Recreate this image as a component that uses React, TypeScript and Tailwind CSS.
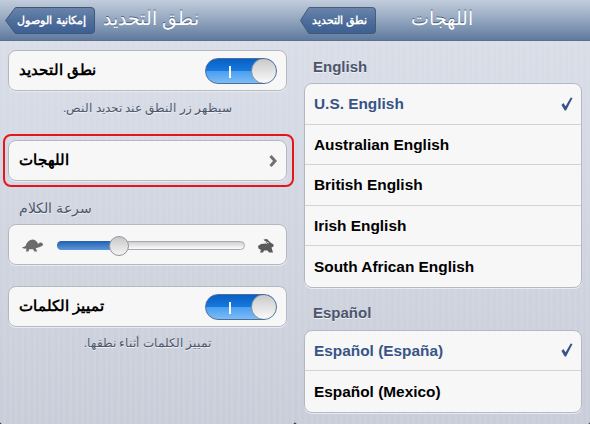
const sans = "font-['Liberation_Sans','Noto_Sans',sans-serif]";
const paneBg =
  "rounded-b-[2px] bg-[repeating-linear-gradient(90deg,transparent_0,transparent_3px,rgba(255,255,255,.06)_3px,rgba(255,255,255,.06)_6px),linear-gradient(#dadfe9,#c8cdd9)]";

function Switch() {
  return (
    <div className="relative h-[26px] w-[72px] overflow-hidden rounded-full border border-[#4a6f9e] bg-[linear-gradient(#0a5fc4_0%,#1578dc_48%,#4a9ff0_52%,#7dbcf6_100%)]">
      <div className="absolute left-[23px] top-[7px] h-[12px] w-[2px] bg-white" />
      <div className="absolute right-[-1px] top-[-1px] h-[26px] w-[26px] rounded-full border border-[#8a8f96] bg-[linear-gradient(#c9c9c9,#fafafa)]" />
    </div>
  );
}

function NavBar({ title, back, backWidth, titleClass }: { title: string; back: string; backWidth: string; titleClass: string }) {
  return (
    <div className="flex h-[41px] items-center border-b border-[#5d708b] bg-[linear-gradient(#c2cddc_0%,#93a6bf_50%,#5f7a9e_100%)] pl-[5px]">
      <div className={`relative flex h-[27px] items-center justify-center ${backWidth}`}>
        <svg className="absolute inset-0 h-full w-full" viewBox="0 0 90 27" preserveAspectRatio="none">
          <defs>
            <linearGradient id="backFill" x1="0" y1="0" x2="0" y2="1">
              <stop offset="0" stopColor="#6a85ab" />
              <stop offset="0.5" stopColor="#4f6f9b" />
              <stop offset="1" stopColor="#3d5f92" />
            </linearGradient>
          </defs>
          <path d="M.6 13.5 10 1q.4-.5 1-.5h75q3.500 0 3.500 3.500v19q0 3.500-3.500 3.500H11q-.6 0-1-.5z" fill="url(#backFill)" stroke="#3f5674" />
        </svg>
        <span dir="rtl" className="relative pl-[3px] text-[11px] font-bold text-white">{back}</span>
      </div>
      <div dir="rtl" className={`mt-[-2px] text-[19px] text-white [text-shadow:0_-1px_0_#4a5f7c] ${titleClass}`}>{title}</div>
    </div>
  );
}

function Card({ children, className }: { children: React.ReactNode; className: string }) {
  return <div className={`mx-[8px] rounded-[8px] border border-[#b4b8c0] bg-[#f7f7f7] shadow-[0_1px_0_#e8ebf1] ${className}`}>{children}</div>;
}

function ToggleRow({ label }: { label: string }) {
  return (
    <Card className="flex h-[41px] items-center justify-between pl-[10px] pr-[9px]">
      <span dir="rtl" className="text-[15px] font-bold text-black">{label}</span>
      <Switch />
    </Card>
  );
}

function Note({ children, className }: { children: string; className: string }) {
  return (
    <p dir="rtl" className={`text-center text-[12px] leading-[16px] text-[#4c566a] [text-shadow:0_1px_0_#eef0f4] ${className}`}>
      {children}
    </p>
  );
}

function Turtle() {
  return (
    <svg width="24" height="13" viewBox="0 1 24 14" fill="#6b6b6b">
      <path d="M0 10.500 4 8.500Q6 2 12 1.500 16 2 17.500 6.500 19 4.500 21.500 5 23.500 6 22.500 8 20 10 15 11L16.500 14.500H13.500L12 12H8L7 14.500H4.500L5 11.500Q2 11.500 0 10.500Z" />
    </svg>
  );
}

function Rabbit() {
  return (
    <svg width="16" height="14" viewBox="0 0 16 14" fill="#5a5a5a">
      <path d="M5.500 .5 9 0 12.500 3.500 15.500 5.500 15.500 7.500 13.500 8.500 15 13.500H11L9.500 11.500H6L5 13.500H2L3 11 .5 9.500 0 7 3 5 7.500 4.500 9.500 5.500Z" />
      <path d="M6.500 2 11 4.200" stroke="#f7f7f7" strokeWidth="0.7" />
    </svg>
  );
}

function Slider() {
  return (
    <Card className="flex h-[41px] items-center pl-[12px] pr-[12px] pt-[2px]">
      <Turtle />
      <div className="relative ml-[12px] h-[9px] w-[188px] rounded-full border border-[#a5a9b0] bg-[linear-gradient(#cfcfcf,#fdfdfd)]">
        <div className="absolute left-[-1px] top-[-1px] h-[9px] w-[57px] rounded-l-full bg-[linear-gradient(#235fae,#5c97dc)]" />
        <div className="absolute left-[51px] top-[-6px] h-[20px] w-[20px] rounded-full border border-[#92969c] bg-[linear-gradient(#c8c8c8,#f4f4f4)]" />
      </div>
      <div className="ml-auto">
        <Rabbit />
      </div>
    </Card>
  );
}

function LeftPane() {
  return (
    <div className={`h-full w-[295px] shrink-0 ${paneBg}`}>
      <NavBar title="نطق التحديد" back="إمكانية الوصول" backWidth="w-[90px]" titleClass="ml-[8px]" />
      <div className="pt-[9px]">
        <ToggleRow label="نطق التحديد" />
        <Note className="mt-[9px]">سيظهر زر النطق عند تحديد النص.</Note>
        <div className="relative mt-[24px]">
          <Card className="flex h-[41px] items-center justify-between pl-[10px] pr-[9px]">
            <span dir="rtl" className="text-[15px] font-bold text-black">اللهجات</span>
            <svg width="8" height="12" viewBox="0 0 8 12" fill="none" stroke="#6f6f6f" strokeWidth="3">
              <path d="M1.500 1 6 6 1.500 11" />
            </svg>
          </Card>
          <div className="absolute left-[3px] top-[-6px] h-[53px] w-[291px] rounded-[8px] border-2 border-[#e8141c]" />
        </div>
        <p dir="rtl" className="ml-[1px] mt-[17px] w-[93px] pr-[2px] text-right text-[14px] leading-[20px] text-[#4c566a] [text-shadow:0_1px_0_#eef0f4]">سرعة الكلام</p>
        <div className="mt-[6px]">
          <Slider />
        </div>
        <div className="mt-[21px]">
          <ToggleRow label="تمييز الكلمات" />
        </div>
        <Note className="mt-[8px]">تمييز الكلمات أثناء نطقها.</Note>
      </div>
    </div>
  );
}

const englishRows = ["Australian English", "British English", "Irish English", "South African English"];

function LangRow({ label, selected, last }: { label: string; selected?: boolean; last?: boolean }) {
  return (
    <div className={`flex h-[40.500px] items-center justify-between pl-[9px] pr-[8px] ${last ? "" : "border-b border-[#d3d3d3]"}`}>
      <span className={`text-[15.400px] font-bold ${selected ? "text-[#385487]" : "text-black"}`}>{label}</span>
      {selected && (
        <svg width="12" height="14" viewBox="0 0 13 15" fill="#385487">
          <path d="M0.500 8.500 2.500 6.500 5 10 10.500 0.500 12.500 1 5.500 14.500H4Z" />
        </svg>
      )}
    </div>
  );
}

function SectionTitle({ children, className }: { children: string; className: string }) {
  return <h2 className={`pl-[17px] text-[15px] font-bold leading-[18px] text-[#4c566a] [text-shadow:0_1px_0_#eef0f4] ${className}`}>{children}</h2>;
}

function RightPane() {
  return (
    <div className={`h-full flex-1 ${paneBg}`}>
      <NavBar title="اللهجات" back="نطق التحديد" backWidth="w-[76px]" titleClass="ml-[35px]" />
      <div className="pl-[1px]">
        <SectionTitle className="mt-[17px]">English</SectionTitle>
        <Card className="mt-[7px]">
          <LangRow label="U.S. English" selected />
          {englishRows.map((r, i) => (
            <LangRow key={r} label={r} last={i === englishRows.length - 1} />
          ))}
        </Card>
        <SectionTitle className="mt-[16px]">Español</SectionTitle>
        <Card className="mt-[8px]">
          <LangRow label="Español (España)" selected />
          <LangRow label="Español (Mexico)" last />
        </Card>
      </div>
    </div>
  );
}

export default function App() {
  return (
    <div className={`flex h-[424px] w-[590px] overflow-hidden bg-black ${sans}`}>
      <LeftPane />
      <RightPane />
    </div>
  );
}
